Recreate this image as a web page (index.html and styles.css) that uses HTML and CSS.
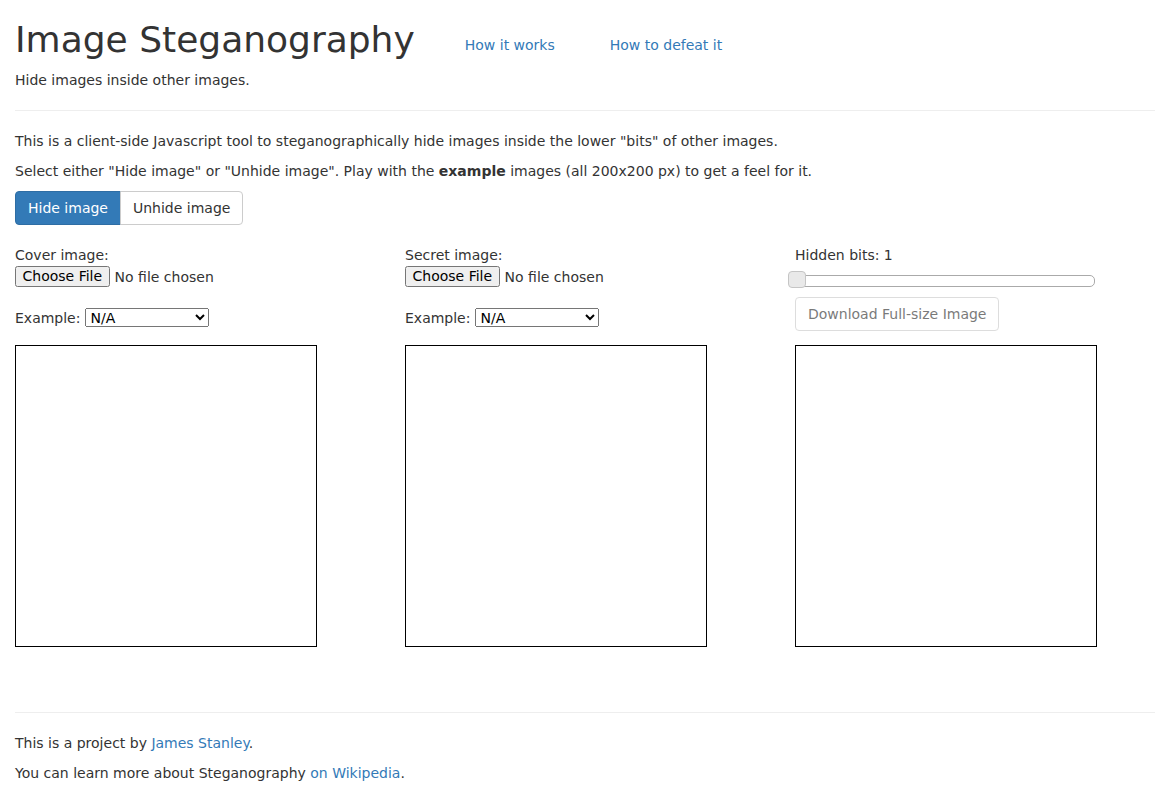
FILE: index.html
```html
<!DOCTYPE html>
<html lang="en">
<head>
<meta charset="utf-8">
<title>Image Steganography</title>
<link rel="stylesheet" href="styles.css">
</head>
<body>
<div class="page">
  <header class="masthead">
    <div class="title-row">
      <h1 class="title">Image Steganography</h1>
      <nav class="top-nav">
        <a href="#how">How it works</a>
        <a href="#defeat">How to defeat it</a>
      </nav>
    </div>
    <p>Hide images inside other images.</p>
  </header>

  <hr class="rule">

  <p>This is a client-side Javascript tool to steganographically hide images inside the lower "bits" of other images.</p>
  <p>Select either "Hide image" or "Unhide image". Play with the <b>example</b> images (all 200x200 px) to get a feel for it.</p>

  <div class="btn-group">
    <button class="btn btn-primary" type="button">Hide image</button>
    <button class="btn btn-default" type="button">Unhide image</button>
  </div>

  <div class="columns">
    <div class="col">
      <div class="field-label">Cover image:</div>
      <input class="file-input" type="file">
      <div class="example-row">
        <span>Example:</span>
        <select class="example-select">
          <option>N/A</option>
          <option>Kitten</option>
          <option>Landscape</option>
        </select>
      </div>
      <canvas class="pane" width="300" height="300"></canvas>
    </div>

    <div class="col">
      <div class="field-label">Secret image:</div>
      <input class="file-input" type="file">
      <div class="example-row">
        <span>Example:</span>
        <select class="example-select">
          <option>N/A</option>
          <option>Kitten</option>
          <option>Landscape</option>
        </select>
      </div>
      <canvas class="pane" width="300" height="300"></canvas>
    </div>

    <div class="col">
      <div class="field-label">Hidden bits: 1</div>
      <div class="slider"><span class="slider-handle"></span></div>
      <button class="btn btn-default btn-disabled" type="button" disabled>Download Full-size Image</button>
      <canvas class="pane pane-result" width="300" height="300"></canvas>
    </div>
  </div>

  <footer class="footer">
    <hr class="rule">
    <p>This is a project by <a href="#author">James Stanley</a>.</p>
    <p>You can learn more about Steganography <a href="#wiki">on Wikipedia</a>.</p>
  </footer>
</div>
</body>
</html>
```

FILE: styles.css
```css
html, body {
  margin: 0;
  padding: 0;
}

body {
  font-family: "DejaVu Sans", sans-serif;
  font-size: 14px;
  line-height: 20px;
  color: #333;
  background: #fff;
}

a {
  color: #337ab7;
  text-decoration: none;
}

p {
  margin: 0 0 10px;
}

.page {
  padding: 0 15px;
}

/* header */
.title-row {
  display: flex;
  align-items: flex-start;
}

.title {
  margin: 20px 0 10px;
  font-size: 36px;
  line-height: 39.6px;
  font-weight: 500;
}

.top-nav {
  display: flex;
  gap: 55px;
  margin: 35px 0 0 50px;
}

.rule {
  margin: 20px 0;
  border: 0;
  border-top: 1px solid #eee;
  height: 0;
}

/* buttons */
.btn-group {
  display: flex;
  margin-bottom: 20px;
}

.btn {
  font-family: "DejaVu Sans", sans-serif;
  font-size: 14px;
  line-height: 20px;
  padding: 6px 12px;
  border: 1px solid #ccc;
  border-radius: 4px;
  background: #fff;
  color: #333;
  cursor: pointer;
}

.btn-group .btn:first-child {
  border-top-right-radius: 0;
  border-bottom-right-radius: 0;
}

.btn-group .btn:last-child {
  border-top-left-radius: 0;
  border-bottom-left-radius: 0;
  margin-left: -1px;
}

.btn-primary {
  background: #337ab7;
  border-color: #2e6da4;
  color: #fff;
}

.btn-disabled {
  opacity: 0.65;
  cursor: not-allowed;
}

/* three columns */
.columns {
  display: flex;
  margin: 0 -15px;
}

.col {
  width: 390px;
  padding: 0 15px;
  box-sizing: border-box;
  display: flex;
  flex-direction: column;
  align-items: flex-start;
}

.field-label {
  line-height: 20px;
}

.file-input {
  font: inherit;
  color: inherit;
  margin: 1px 0 0;
  height: 21px;
}

.file-input::file-selector-button {
  font: inherit;
  color: #000;
  height: 21px;
  padding: 0 5.5px;
  margin-right: 5px;
}

.example-row {
  display: flex;
  align-items: center;
  gap: 5px;
  margin-top: 21px;
  height: 20px;
}

.example-select {
  font: inherit;
  color: #000;
  width: 124px;
  height: 19px;
  margin: 0;
}

.pane {
  display: block;
  width: 300px;
  height: 300px;
  border: 1px solid #000;
  margin-top: 17px;
}

/* hidden bits slider */
.slider {
  position: relative;
  width: 298px;
  height: 10px;
  margin-top: 10px;
  border: 1px solid #aaa;
  border-radius: 5px;
  background: #fff;
}

.slider-handle {
  position: absolute;
  left: -8px;
  top: -5px;
  width: 16px;
  height: 15px;
  border: 1px solid #c5c5c5;
  border-radius: 4px;
  background: #e9e9e9;
}

.col .btn-disabled {
  margin-top: 10px;
}

.col .pane-result {
  margin-top: 14px;
}

/* footer */
.footer {
  margin-top: 65px;
}
```
